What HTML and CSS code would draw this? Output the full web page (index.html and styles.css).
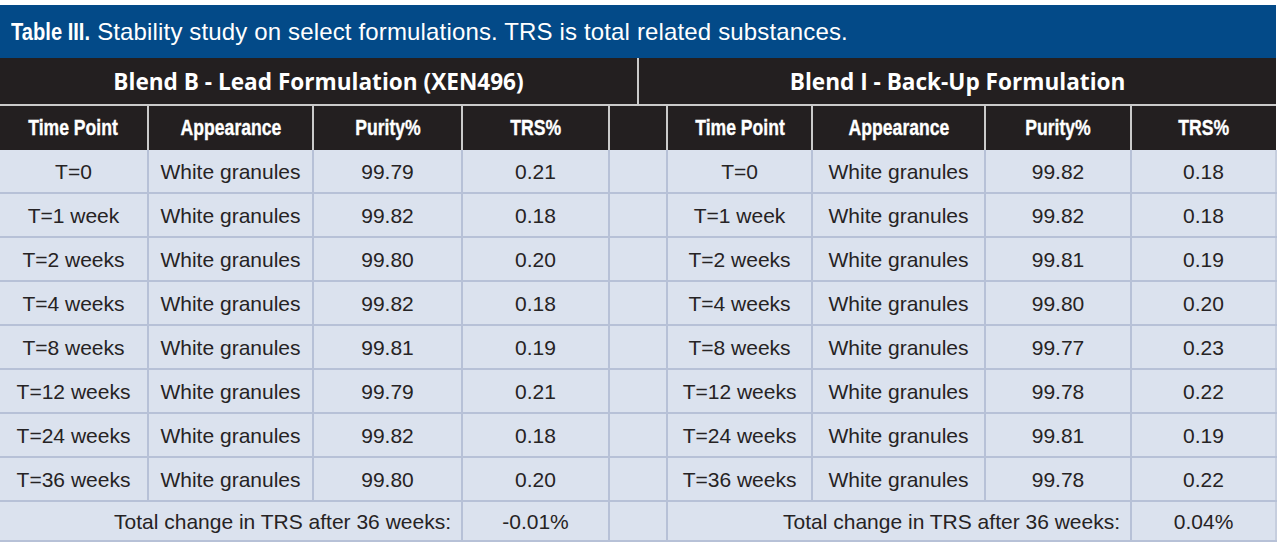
FILE: index.html
```html
<!DOCTYPE html>
<html lang="en">
<head>
<meta charset="utf-8">
<title>Table III</title>
<link rel="stylesheet" href="styles.css">
</head>
<body>
<div class="page">
  <div class="caption"><span class="cap-label">Table III.</span> Stability study on select formulations. TRS is total related substances.</div>
  <table class="stab">
    <colgroup>
      <col class="c1"><col class="c2"><col class="c3"><col class="c4"><col class="c5"><col class="c5"><col class="c6"><col class="c7"><col class="c8"><col class="c9">
    </colgroup>
    <thead>
      <tr class="blend">
        <th colspan="5">Blend B - Lead Formulation (XEN496)</th>
        <th colspan="5">Blend I - Back-Up Formulation</th>
      </tr>
      <tr class="cols">
        <th><span class="nar">Time Point</span></th><th><span class="nar">Appearance</span></th><th><span class="nar">Purity%</span></th><th><span class="nar">TRS%</span></th><th colspan="2"></th><th><span class="nar">Time Point</span></th><th><span class="nar">Appearance</span></th><th><span class="nar">Purity%</span></th><th><span class="nar">TRS%</span></th>
      </tr>
    </thead>
    <tbody>
      <tr><td>T=0</td><td>White granules</td><td>99.79</td><td>0.21</td><td colspan="2"></td><td>T=0</td><td>White granules</td><td>99.82</td><td>0.18</td></tr>
      <tr><td>T=1 week</td><td>White granules</td><td>99.82</td><td>0.18</td><td colspan="2"></td><td>T=1 week</td><td>White granules</td><td>99.82</td><td>0.18</td></tr>
      <tr><td>T=2 weeks</td><td>White granules</td><td>99.80</td><td>0.20</td><td colspan="2"></td><td>T=2 weeks</td><td>White granules</td><td>99.81</td><td>0.19</td></tr>
      <tr><td>T=4 weeks</td><td>White granules</td><td>99.82</td><td>0.18</td><td colspan="2"></td><td>T=4 weeks</td><td>White granules</td><td>99.80</td><td>0.20</td></tr>
      <tr><td>T=8 weeks</td><td>White granules</td><td>99.81</td><td>0.19</td><td colspan="2"></td><td>T=8 weeks</td><td>White granules</td><td>99.77</td><td>0.23</td></tr>
      <tr><td>T=12 weeks</td><td>White granules</td><td>99.79</td><td>0.21</td><td colspan="2"></td><td>T=12 weeks</td><td>White granules</td><td>99.78</td><td>0.22</td></tr>
      <tr><td>T=24 weeks</td><td>White granules</td><td>99.82</td><td>0.18</td><td colspan="2"></td><td>T=24 weeks</td><td>White granules</td><td>99.81</td><td>0.19</td></tr>
      <tr><td>T=36 weeks</td><td>White granules</td><td>99.80</td><td>0.20</td><td colspan="2"></td><td>T=36 weeks</td><td>White granules</td><td>99.78</td><td>0.22</td></tr>
      <tr class="total"><td colspan="3" class="lbl">Total change in TRS after 36 weeks:</td><td>-0.01%</td><td colspan="2"></td><td colspan="3" class="lbl">Total change in TRS after 36 weeks:</td><td>0.04%</td></tr>
    </tbody>
  </table>
</div>
</body>
</html>
```

FILE: styles.css
```css
html, body {
  margin: 0;
  padding: 0;
  background: #ffffff;
}

.page {
  width: 1276px;
  padding-top: 5px;
  font-family: "Liberation Sans", Arial, sans-serif;
}

.caption {
  height: 53px;
  background: #034a88;
  color: #ffffff;
  font-size: 24px;
  letter-spacing: 0.15px;
  line-height: 53px;
  padding-left: 11px;
  white-space: nowrap;
}

.cap-label {
  display: inline-block;
  font-weight: bold;
  font-size: 23px;
  letter-spacing: 0;
  transform: scaleX(0.875);
  transform-origin: left center;
  margin-right: -11px;
}

.stab {
  width: 1276px;
  table-layout: fixed;
  border-collapse: collapse;
  border-spacing: 0;
}

.c1 { width: 148px; }
.c2 { width: 165px; }
.c3 { width: 149px; }
.c4 { width: 147px; }
.c5 { width: 29px; }
.c6 { width: 145px; }
.c7 { width: 173px; }
.c8 { width: 146px; }
.c9 { width: 145px; }

.stab th {
  background: #231f20;
  color: #ffffff;
  padding: 0;
  text-align: center;
  white-space: nowrap;
}

.blend th {
  height: 46px;
  font-family: "Open Sans", Lato, sans-serif;
  font-weight: 700;
  font-size: 22.6px;
  border-bottom: 2px solid #cacaca;
  border-left: 2px solid #cacaca;
}

.blend th:first-child {
  border-left: none;
}

.cols th {
  height: 44px;
  font-family: "Liberation Sans", Arial, sans-serif;
  font-weight: bold;
  font-size: 22px;
  border-left: 2px solid #cacaca;
}

.cols th:first-child {
  border-left: none;
}

.nar {
  display: inline-block;
  transform: scaleX(0.8);
  -webkit-text-stroke: 0.35px #ffffff;
}

.stab td {
  height: 41px;
  padding: 1px 0 0;
  background: #dbe2ee;
  color: #262324;
  font-size: 21px;
  text-align: center;
  border: 2px solid #b7c1d7;
  border-top: none;
  white-space: nowrap;
}

.stab td:first-child {
  border-left: none;
}

.stab td:last-child {
  border-right: 2px solid #c6cede;
}

.total td {
  height: 37px;
}

.total .lbl {
  text-align: right;
  padding-right: 10px;
}
```
